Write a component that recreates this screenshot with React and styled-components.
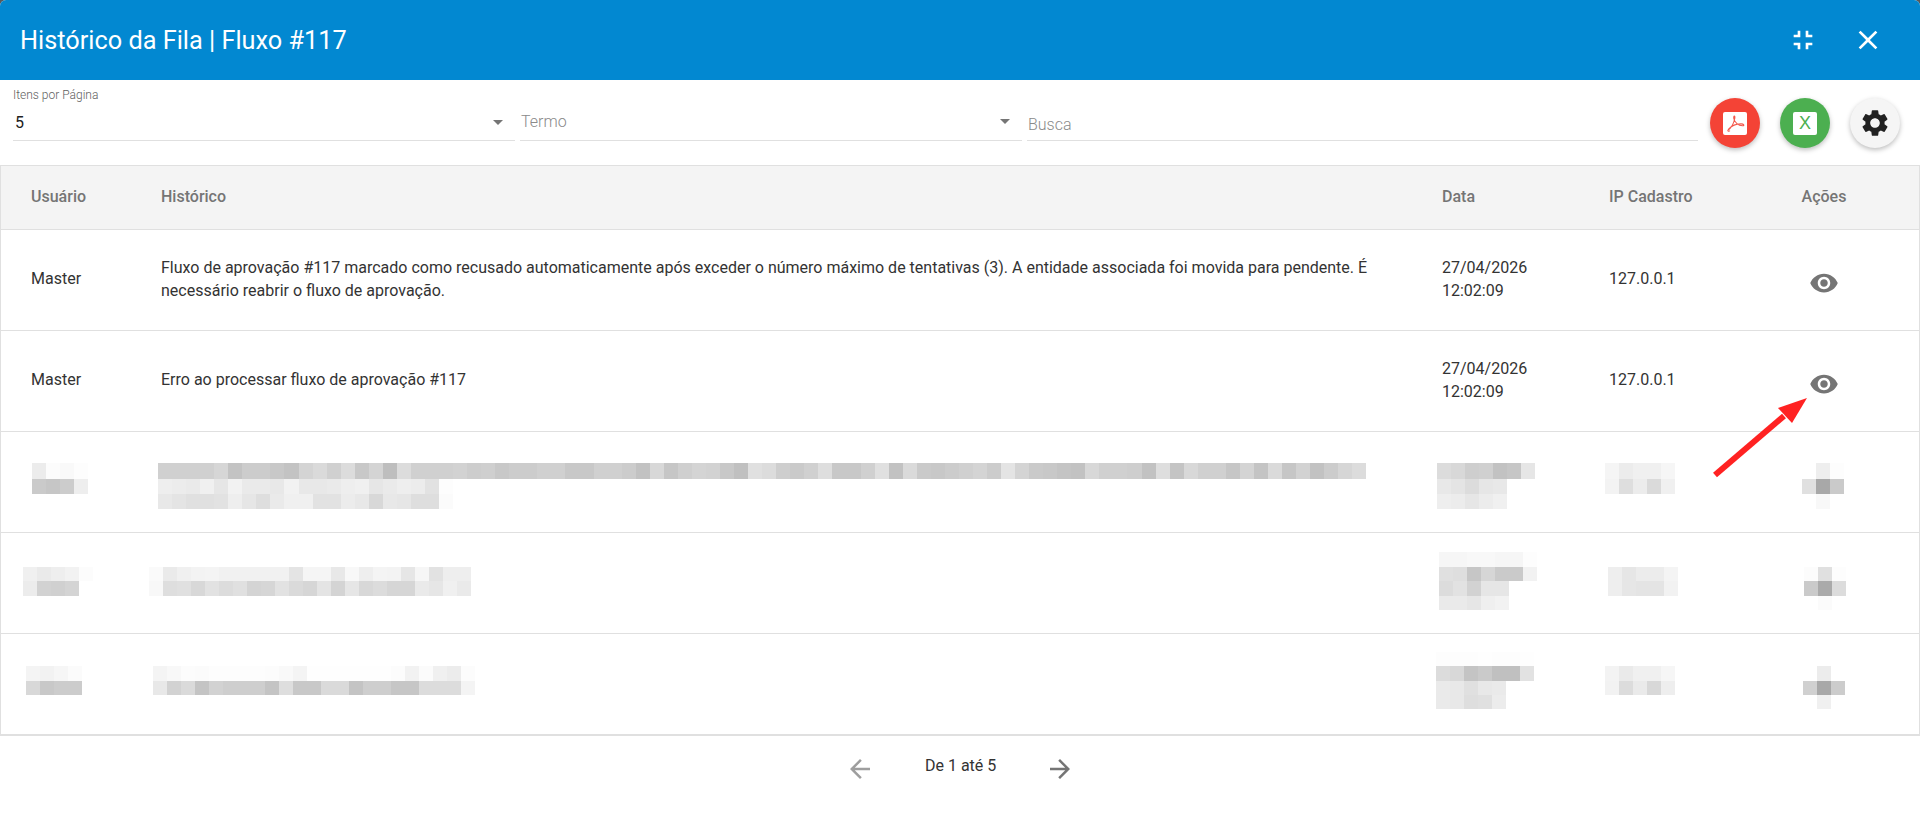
import styled, { createGlobalStyle } from 'styled-components'
import {
  MdFullscreenExit,
  MdClose,
  MdSettings,
  MdVisibility,
  MdArrowBack,
  MdArrowForward,
} from 'react-icons/md'

const GlobalStyle = createGlobalStyle`
  html, body {
    margin: 0;
    height: 100%;
    background: #5a5a5a;
    font-family: Roboto, "Liberation Sans", sans-serif;
  }
`

// grey levels of the censored rows, one string per line of blocks
const masked = [
  {
    user: { dx: 1, dy: 31, heights: [16, 15], lines: ['ec fc f9 fd', 'ca c6 cc ee'] },
    history: {
      dx: -3,
      dy: 31,
      width: 14.05,
      heights: [16, 15, 15],
      lines: [
        'd0 d0 d0 d0 d6 c3 cc cc c8 c3 d4 da d0 dc c8 d4 be dc d0 d0 d0 d2 cd cf c8 cc cc d0 d0 c8 c8 d0 d0 cc c2 d8 c6 cf d4 d2 c8 c0 e0 dc ce ca d0 de c8 c8 d0 e0 c2 da ca c8 cc d0 d4 cc e4 d4 ca c8 c4 c2 d8 d0 d0 ce c2 de c4 d8 d0 d0 c6 d4 c4 da c6 d2 c2 cc d6 dc',
        'ee ec ea f0 e6 f2 ea ea e8 f2 e8 e8 ea ee f0 e6 ea ee ec e2 fd',
        'e8 e4 e0 e0 e2 ee e6 de ea f0 f0 e2 e2 ec e8 d8 e8 e6 de de fb',
      ],
    },
    date: {
      dx: -5,
      dy: 31,
      heights: [16, 15, 15],
      lines: ['dc d8 ce d0 c2 c6 e6', 'e8 e4 dc e6 e8', 'ee ec e6 ec f0'],
    },
    ip: { dx: -4, dy: 31, heights: [16, 15], lines: ['f5 ec f0 f0 f6', 'f3 de ec da f0'] },
    action: { dx: 12, dy: 31, heights: [16, 15, 15], lines: ['ff ee fd', 'e0 a8 ca', 'ff f8 ff'] },
  },
  {
    user: { dx: -8, dy: 34, heights: [14, 15], lines: ['f0 ea ee f2 fc', 'ec d2 d0 d4'] },
    history: {
      dx: -12,
      dy: 34,
      heights: [14, 15],
      lines: [
        'fa ea f0 f3 f4 f1 f1 f1 f1 f1 e4 f5 f5 e8 f8 ee f4 f3 e6 f6 e2 ee ee',
        'f8 de e0 d8 e2 dc e0 d4 d6 e2 da d6 e4 d4 e6 d8 dc d6 d6 ea e6 f0 ea',
      ],
    },
    date: {
      dx: -3,
      dy: 19,
      heights: [15, 14, 15, 14],
      lines: ['f6 f6 f8 f8 f6 f6 fd', 'e0 de c6 d6 ca ca f2', 'dc e2 d2 e6 e6', 'ea ea e6 ef f2'],
    },
    ip: { dx: -1, dy: 34, heights: [14, 15], lines: ['ee e6 ec ec f4', 'ee e6 e4 e4 f2'] },
    action: { dx: 14, dy: 34, heights: [14, 15, 14], lines: ['fc e0 fd', 'ca aa dc', 'ff fb ff'] },
  },
  {
    user: { dx: -5, dy: 32, heights: [15, 14], lines: ['f4 f2 f6 fb', 'd8 c8 cc cc'] },
    history: {
      dx: -8,
      dy: 32,
      heights: [15, 14],
      lines: [
        'f4 f8 fc fb fd fd fd fd fc f9 f4 fe fe fe fe fe fe fc f2 fb f0 ec fc',
        'e8 d2 da c4 d2 ce ce ce c4 de c8 c8 da da c4 ce ce c6 c6 dc dc dc f4',
      ],
    },
    date: {
      dx: -6,
      dy: 18,
      heights: [14, 15, 14, 14],
      lines: ['fd fd fd fe fd fd fe', 'dc d8 c4 ca c0 c0 e2', 'ea e8 e0 e8 ea', 'ea e8 de e0 ec'],
    },
    ip: { dx: -4, dy: 32, heights: [15, 14], lines: ['f3 ea f0 f0 f6', 'f2 dc ea d8 ee'] },
    action: { dx: 13, dy: 32, heights: [15, 14, 14], lines: ['ff ec ff', 'd0 a8 cc', 'ff f0 ff'] },
  },
]

const Mosaic = ({ dx, dy, width = 14, heights, lines }) => {
  const columns = Math.max(...lines.map((line) => line.split(' ').length))
  const total = heights.reduce((sum, h) => sum + h, 0)
  let top = 0
  return (
    <MosaicBox $dx={dx} $dy={dy} width={columns * width} height={total} shapeRendering='crispEdges'>
      {lines.map((line, row) => {
        const y = top
        top += heights[row]
        return line.split(' ').map((grey, col) => (
          <rect
            key={`${row}-${col}`}
            x={col * width}
            y={y}
            width={width}
            height={heights[row]}
            fill={`#${grey}${grey}${grey}`}
          />
        ))
      })}
    </MosaicBox>
  )
}

const PdfMark = () => (
  <svg width='24' height='23' viewBox='0 0 24 23' fill='none'>
    <path
      d='M4.5 18.5C8 16.5 11 11 11.8 6.2C12.2 3.2 10.4 3.2 10.8 6.5C11.5 10.5 15.5 13.6 19.5 13.8C21.8 13.9 21 11.8 17.8 11.9C13.5 12 8.5 14 5.8 16.8C4 18.8 5 20.2 7 18.6'
      stroke='#f4574b'
      strokeWidth='1.1'
    />
  </svg>
)

const App = () => {
  return (
    <>
      <GlobalStyle />
      <Modal>
        <Header>
          <Title>Histórico da Fila | Fluxo #117</Title>
          <HeaderActions>
            <MdFullscreenExit size={32} />
            <MdClose size={32} />
          </HeaderActions>
        </Header>

        <Toolbar>
          <Field>
            <Label>Itens por Página</Label>
            <Value>
              <span>5</span>
              <Caret />
            </Value>
          </Field>
          <Field>
            <Value $placeholder>
              <span>Termo</span>
              <Caret />
            </Value>
          </Field>
          <Field>
            <Value $placeholder $low>
              <span>Busca</span>
            </Value>
          </Field>
          <RoundButtons>
            <RoundButton $bg='#f44336'>
              <Sheet>
                <PdfMark />
              </Sheet>
            </RoundButton>
            <RoundButton $bg='#4caf50'>
              <Sheet>X</Sheet>
            </RoundButton>
            <RoundButton $bg='#f5f5f5'>
              <MdSettings size={32} color='#212121' />
            </RoundButton>
          </RoundButtons>
        </Toolbar>

        <Table>
          <HeadRow>
            <span>Usuário</span>
            <span>Histórico</span>
            <span>Data</span>
            <span>IP Cadastro</span>
            <HeadAction>Ações</HeadAction>
          </HeadRow>
          <Row>
            <span>Master</span>
            <span>
              Fluxo de aprovação #117 marcado como recusado automaticamente após exceder o número máximo de
              tentativas (3). A entidade associada foi movida para pendente. É necessário reabrir o fluxo de
              aprovação.
            </span>
            <span>
              27/04/2026
              <br />
              12:02:09
            </span>
            <span>127.0.0.1</span>
            <EyeCell>
              <MdVisibility size={30} />
            </EyeCell>
          </Row>
          <Row>
            <span>Master</span>
            <span>Erro ao processar fluxo de aprovação #117</span>
            <span>
              27/04/2026
              <br />
              12:02:09
            </span>
            <span>127.0.0.1</span>
            <EyeCell>
              <MdVisibility size={30} />
            </EyeCell>
          </Row>
          {masked.map((row, i) => (
            <MaskedRow key={i}>
              <div>
                <Mosaic {...row.user} />
              </div>
              <div>
                <Mosaic {...row.history} />
              </div>
              <div>
                <Mosaic {...row.date} />
              </div>
              <div>
                <Mosaic {...row.ip} />
              </div>
              <div>
                <Mosaic {...row.action} />
              </div>
            </MaskedRow>
          ))}
        </Table>

        <Pagination>
          <MdArrowBack size={30} color='#9e9e9e' />
          <PageInfo>De 1 até 5</PageInfo>
          <MdArrowForward size={30} color='#757575' />
        </Pagination>

        <Pointer width='100' height='85' viewBox='0 0 100 85'>
          <path d='M3 80L72 21' stroke='#ff2222' strokeWidth='6' />
          <path d='M95 3L66 13L80 28Z' fill='#ff2222' />
        </Pointer>
      </Modal>
    </>
  )
}

const Modal = styled.div`
  position: relative;
  height: 814px;
  background: #fff;
  border-radius: 6px 6px 0 0;
  overflow: hidden;
`

const Header = styled.header`
  display: flex;
  align-items: center;
  justify-content: space-between;
  height: 80px;
  padding: 0 36px 0 20px;
  background: #0288d1;
  color: #fff;
`

const Title = styled.h1`
  margin: 0;
  font-size: 25.3px;
  font-weight: 400;
`

const HeaderActions = styled.div`
  display: flex;
  align-items: center;
  gap: 33px;
`

const Toolbar = styled.div`
  display: grid;
  grid-template-columns: 502px 502px 671px auto;
  column-gap: 5px;
  height: 85px;
  padding: 8px 20px 0 13px;
  box-sizing: border-box;
`

const Field = styled.div`
  display: flex;
  flex-direction: column;
  justify-content: flex-end;
  height: 53px;
  box-sizing: border-box;
  border-bottom: 1px solid #e0e0e0;
`

const Label = styled.label`
  font-size: 12px;
  font-weight: 300;
  line-height: 14px;
  color: #616161;
`

const valueOffset = (p) => {
  if (p.$low) return '7px'
  return p.$placeholder ? '0' : '2px'
}

const Value = styled.div`
  display: flex;
  align-items: center;
  justify-content: space-between;
  height: 38px;
  padding: ${valueOffset} 12px 0 ${(p) => (p.$placeholder ? '1px' : '2px')};
  box-sizing: border-box;
  font-size: 16px;
  font-weight: ${(p) => (p.$placeholder ? 300 : 400)};
  color: ${(p) => (p.$placeholder ? '#8a8a8a' : '#212121')};
`

const Caret = styled.i`
  border-left: 5.5px solid transparent;
  border-right: 5.5px solid transparent;
  border-top: 5.5px solid #757575;
`

const RoundButtons = styled.div`
  display: flex;
  gap: 20px;
  margin-left: 7px;
  padding-top: 10px;
`

const RoundButton = styled.button`
  display: flex;
  align-items: center;
  justify-content: center;
  width: 50px;
  height: 50px;
  padding: 0;
  border: 0;
  border-radius: 50%;
  background: ${(p) => p.$bg};
  box-shadow: 0 2px 5px rgba(0, 0, 0, 0.26);
`

const Sheet = styled.div`
  display: flex;
  align-items: center;
  justify-content: center;
  width: 24px;
  height: 23px;
  border-radius: 2px;
  background: #fff;
  color: #4caf50;
  font-size: 18px;
  font-weight: 300;
`

const Table = styled.div`
  border: 1px solid #e0e0e0;
`

const columns = `
  display: grid;
  grid-template-columns: 130px 1281px 167px 181px 159px;
  box-sizing: border-box;
`

const HeadRow = styled.div`
  ${columns}
  align-items: center;
  height: 64px;
  padding-bottom: 2px;
  background: #f4f4f4;
  border-bottom: 1px solid #e0e0e0;
  font-size: 16px;
  font-weight: 500;
  color: #757575;

  > span {
    padding: 0 30px;
  }
`

const HeadAction = styled.span`
  padding: 0 31px 0 0 !important;
  text-align: center;
`

const Row = styled.div`
  ${columns}
  align-items: center;
  height: 101px;
  padding-bottom: 3px;
  border-bottom: 1px solid #e0e0e0;
  font-size: 16px;
  line-height: 23px;
  color: #333;

  > span {
    padding: 0 30px;
  }
`

const EyeCell = styled.span`
  display: flex;
  justify-content: center;
  padding: 8px 31px 0 0 !important;
  color: #757575;
`

const MaskedRow = styled.div`
  ${columns}
  height: 101px;
  border-bottom: 1px solid #e0e0e0;

  > div {
    padding-left: 30px;
  }
`

const MosaicBox = styled.svg`
  display: block;
  margin: ${(p) => p.$dy}px 0 0 ${(p) => p.$dx}px;
`

const Pagination = styled.nav`
  display: flex;
  justify-content: center;
  gap: 50px;
  padding-top: 18px;
`

const PageInfo = styled.span`
  width: 70px;
  margin-top: 1px;
  font-size: 16px;
  line-height: 22px;
  text-align: center;
  white-space: nowrap;
  color: #333;
`

const Pointer = styled.svg`
  position: absolute;
  left: 1712px;
  top: 395px;
`

export default App
